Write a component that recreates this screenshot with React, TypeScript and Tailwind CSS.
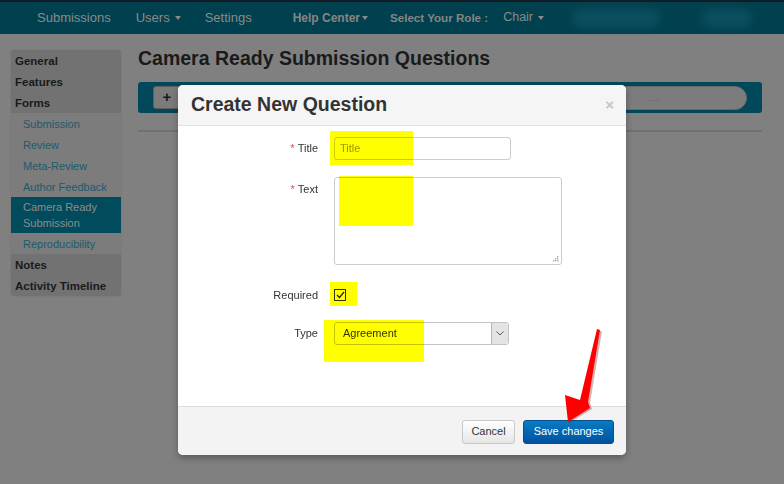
import React from 'react';

const font = { fontFamily: '"Liberation Sans", Arial, sans-serif' };

function Caret({ className = 'ml-[5px]' }: { className?: string }) {
  return <span className={`inline-block h-0 w-0 border-x-[3.5px] border-t-[4px] border-x-transparent border-t-[#8a8a8a] ${className}`} />;
}

const sidebar: { label: string; kind: 'head' | 'sub' | 'active' }[] = [
  { label: 'General', kind: 'head' },
  { label: 'Features', kind: 'head' },
  { label: 'Forms', kind: 'head' },
  { label: 'Submission', kind: 'sub' },
  { label: 'Review', kind: 'sub' },
  { label: 'Meta-Review', kind: 'sub' },
  { label: 'Author Feedback', kind: 'sub' },
  { label: 'Camera Ready Submission', kind: 'active' },
  { label: 'Reproducibility', kind: 'sub' },
  { label: 'Notes', kind: 'head' },
  { label: 'Activity Timeline', kind: 'head' },
];

function Navbar() {
  return (
    <div className="relative h-[34px] border-t-2 border-[#131b25] bg-[#01414f] text-[#8a8a8a]">
      <div className="flex h-full items-center pb-[1px]">
        <span className="ml-[37px] text-[13px]">Submissions</span>
        <span className="ml-[25px] flex items-center text-[13px]">
          Users
          <Caret />
        </span>
        <span className="ml-[24px] text-[13px]">Settings</span>
        <span className="ml-[41px] flex items-center text-[12px] font-bold text-[#858585]">
          Help Center
          <Caret className="ml-[2px]" />
        </span>
        <span className="ml-[22px] text-[11.6px] font-bold text-[#858585]">Select Your Role :</span>
        <span className="ml-[15px] flex items-center text-[12.5px] text-[#8a8a8a]">
          Chair
          <Caret />
        </span>
      </div>
      {/* blurred account info */}
      <div className="absolute left-[572px] top-[7px] h-[18px] w-[88px] rounded-full bg-[#0b5060] blur-[4px]" />
      <div className="absolute left-[702px] top-[7px] h-[18px] w-[50px] rounded-full bg-[#0b5060] blur-[4px]" />
    </div>
  );
}

function Sidebar() {
  return (
    <div className="mt-[4px] w-[110px] overflow-hidden rounded-[3px] shadow-[0_0_1px_rgba(0,0,0,0.35)]">
      {sidebar.map((item) => {
        if (item.kind === 'head')
          return (
            <div key={item.label} className="bg-[#727272] px-[4px] py-[2.5px] text-[11.5px] font-bold leading-4 text-[#1a1a1a]">
              {item.label}
            </div>
          );
        if (item.kind === 'active')
          return (
            <div key={item.label} className="bg-[#014b5c] py-[2px] pl-[12px] pr-[4px] text-[11px] leading-4 text-[#8c8c8c]">
              Camera Ready
              <br />
              Submission
            </div>
          );
        return (
          <div key={item.label} className="bg-[#7c7c7c] py-[2.5px] pl-[12px] pr-[4px] text-[11px] leading-4 text-[#1c5a6b]">
            {item.label}
          </div>
        );
      })}
    </div>
  );
}

function Main() {
  return (
    <div className="w-[624px]">
      <h1 className="text-[19.5px] font-bold leading-6 text-[#1a1a1a]">Camera Ready Submission Questions</h1>
      <div className="mt-[12px] flex h-[31px] items-center justify-between rounded-[3px] bg-[#01485b] px-[15px]">
        <div className="flex h-[23px] w-[28px] items-center justify-center rounded-[3px] border border-[#5f5f5f] bg-[#7b7b7b] text-[15px] font-bold text-[#1a1a1a]">
          +
        </div>
        <div className="flex h-[24px] w-[300px] items-center rounded-full border border-[#6a6a6a] bg-[#7c7c7c] pl-[200px] text-[10px] text-[#666]">
          ....
        </div>
      </div>
      <div className="mt-[17px] h-[2px] bg-[#707070]" />
    </div>
  );
}

// highlighter marks: multiply so the field below still shows through
function Highlight({ className }: { className: string }) {
  return <div className={`absolute bg-[#ffff00] mix-blend-multiply ${className}`} />;
}

function Modal() {
  return (
    <div className="absolute left-[178px] top-[85px] w-[448px] rounded-[5px] bg-white shadow-[0_3px_7px_rgba(0,0,0,0.3)]">
      <div className="relative flex h-[41px] items-center justify-between rounded-t-[5px] border-b border-[#e3e3e3] bg-[#f5f5f5] px-[13px]">
        <h2 className="text-[19.5px] font-bold text-[#333]">Create New Question</h2>
        <span className="mr-[-1px] text-[15px] font-bold text-[#c4c4c4]">×</span>
      </div>

      <div className="relative isolate h-[280px] bg-white pt-[11px]">
        {/* Title */}
        <div className="flex items-center">
          <label className="w-[140px] text-right text-[11px] text-[#333]">
            <span className="mr-[3px] text-[#d9534f]">*</span>Title
          </label>
          <div className="ml-[16px] flex h-[23px] w-[177px] items-center rounded-[3px] border border-[#ccc] px-[5px] text-[11px] text-[#9a9a9a]">
            Title
          </div>
        </div>
        {/* Text */}
        <div className="mt-[17px] flex items-start">
          <label className="w-[140px] pt-[4px] text-right text-[11px] leading-4 text-[#333]">
            <span className="mr-[3px] text-[#d9534f]">*</span>Text
          </label>
          <div className="relative ml-[16px] h-[88px] w-[228px] rounded-[3px] border border-[#ccc]">
            <svg className="absolute bottom-[2px] right-[2px]" width="7" height="7" viewBox="0 0 7 7">
              <rect x="5" y="1" width="1.4" height="1.4" fill="#aaa" />
              <rect x="3" y="3" width="1.4" height="1.4" fill="#aaa" />
              <rect x="5" y="3" width="1.4" height="1.4" fill="#aaa" />
              <rect x="1" y="5" width="1.4" height="1.4" fill="#aaa" />
              <rect x="3" y="5" width="1.4" height="1.4" fill="#aaa" />
              <rect x="5" y="5" width="1.4" height="1.4" fill="#aaa" />
            </svg>
          </div>
        </div>
        {/* Required */}
        <div className="mt-[20px] flex h-[20px] items-center">
          <label className="w-[140px] text-right text-[11px] text-[#333]">Required</label>
          <div className="ml-[16px] flex h-[12px] w-[12px] items-center justify-center border border-[#333] bg-white">
            <svg width="9" height="8" viewBox="0 0 9 8">
              <path d="M1 4 L3.5 6.5 L8 1" fill="none" stroke="#222" strokeWidth="1.2" />
            </svg>
          </div>
        </div>
        {/* Type */}
        <div className="mt-[17px] flex items-center">
          <label className="w-[140px] text-right text-[11px] text-[#333]">Type</label>
          <div className="ml-[16px] flex h-[23px] w-[175px] items-center overflow-hidden rounded-[3px] border border-[#c4c4c4]">
            <span className="flex-1 pl-[8px] text-[11px] text-[#333]">Agreement</span>
            <span className="flex h-full w-[17px] items-center justify-center border-l border-[#b5b5b5] bg-[#e4e4e4]">
              <svg width="8" height="5" viewBox="0 0 8 5">
                <path d="M0.5 0.5 L4 4 L7.5 0.5" fill="none" stroke="#555" strokeWidth="1" />
              </svg>
            </span>
          </div>
        </div>

        <Highlight className="left-[152px] top-[5px] h-[34px] w-[83px]" />
        <Highlight className="left-[161px] top-[50px] h-[50px] w-[74px]" />
        <Highlight className="left-[152px] top-[156px] h-[24px] w-[27px]" />
        <Highlight className="left-[146px] top-[194px] h-[42px] w-[100px]" />
      </div>

      <div className="flex h-[49px] items-center justify-end gap-[8px] rounded-b-[5px] border-t border-[#dcdcdc] bg-[#f3f3f3] pr-[12px] pt-[1px]">
        <button className="h-[24px] w-[53px] rounded-[3px] border border-[#c8c8c8] bg-gradient-to-b from-white to-[#e6e6e6] text-[11px] text-[#333]">
          Cancel
        </button>
        <button className="h-[24px] w-[91px] rounded-[3px] border border-[#0a4f8f] bg-gradient-to-b from-[#0a7cc4] to-[#0052a0] text-[11px] text-white">
          Save changes
        </button>
      </div>
    </div>
  );
}

export default function App() {
  return (
    <div className="relative h-[484px] w-[784px] overflow-hidden bg-[#808080]" style={font}>
      <Navbar />
      <div className="flex gap-[17px] pl-[11px] pt-[12px]">
        <Sidebar />
        <Main />
      </div>
      <Modal />
      {/* red annotation arrow */}
      <svg className="absolute left-[560px] top-[325px]" width="46" height="102" viewBox="560 325 46 102">
        <polygon points="598,330 601,330 589,402 591,408 568,422 565,395 581,400" fill="#600" opacity="0.3" transform="translate(1,1)" />
        <polygon points="597,329 600,330 588,402 590,408 568,422 565,395 580,400" fill="#ff0000" />
      </svg>
    </div>
  );
}
